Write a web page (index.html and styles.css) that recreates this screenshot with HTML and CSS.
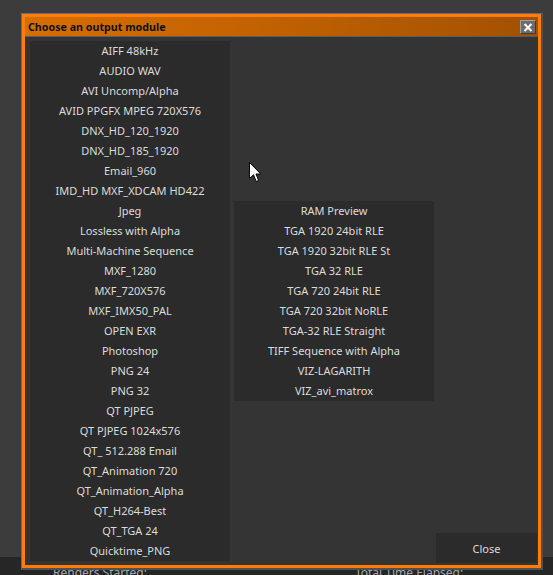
FILE: index.html
```html
<!DOCTYPE html>
<html lang="en">
<head>
    <meta charset="UTF-8">
    <meta name="viewport" content="width=device-width, initial-scale=1.0">
    <title>Choose an output module</title>
    <link rel="stylesheet" href="styles.css">
</head>
<body>

<div class="app">
    <div class="app-top"></div>
    <div class="status-bar">
        <span class="status-left">Renders Started:</span>
        <span class="status-right">Total Time Elapsed:</span>
    </div>
</div>

<!-- Dialog -->
<div class="dialog">
    <div class="frame">
        <div class="titlebar">
            <span class="title">Choose an output module</span>
            <button class="x-btn" aria-label="Close">
                <svg width="10" height="9" viewBox="0 0 10 9">
                    <path d="M1.5 1 L8.5 8 M8.5 1 L1.5 8" stroke="#fff" stroke-width="2" fill="none"/>
                </svg>
            </button>
        </div>
        <div class="body">
            <ul class="list">
                <li>AIFF 48kHz</li>
                <li>AUDIO WAV</li>
                <li>AVI Uncomp/Alpha</li>
                <li>AVID PPGFX MPEG 720X576</li>
                <li>DNX_HD_120_1920</li>
                <li>DNX_HD_185_1920</li>
                <li>Email_960</li>
                <li>IMD_HD MXF_XDCAM HD422</li>
                <li>Jpeg</li>
                <li>Lossless with Alpha</li>
                <li>Multi-Machine Sequence</li>
                <li>MXF_1280</li>
                <li>MXF_720X576</li>
                <li>MXF_IMX50_PAL</li>
                <li>OPEN EXR</li>
                <li>Photoshop</li>
                <li>PNG 24</li>
                <li>PNG 32</li>
                <li>QT PJPEG</li>
                <li>QT PJPEG 1024x576</li>
                <li>QT_ 512.288 Email</li>
                <li>QT_Animation 720</li>
                <li>QT_Animation_Alpha</li>
                <li>QT_H264-Best</li>
                <li>QT_TGA 24</li>
                <li>Quicktime_PNG</li>
            </ul>
            <ul class="list list-side">
                <li>RAM Preview</li>
                <li>TGA 1920 24bit RLE</li>
                <li>TGA 1920 32bit RLE St</li>
                <li>TGA 32 RLE</li>
                <li>TGA 720 24bit RLE</li>
                <li>TGA 720 32bit NoRLE</li>
                <li>TGA-32 RLE Straight</li>
                <li>TIFF Sequence with Alpha</li>
                <li>VIZ-LAGARITH</li>
                <li>VIZ_avi_matrox</li>
            </ul>
            <div class="actions">
                <button class="close-btn">Close</button>
            </div>
        </div>
    </div>
</div>

<!-- mouse pointer -->
<svg class="cursor" width="13" height="21" viewBox="0 0 13 21">
    <path d="M0.5 0.5 L0.5 16.5 L4.5 12.8 L7.2 19.5 L9.6 18.5 L7 12 L11.8 12 Z" fill="#fff" stroke="#000" stroke-width="1"/>
</svg>

</body>
</html>
```

FILE: styles.css
```css
/* Fond de l'application */
body {
    margin: 0;
    width: 553px;
    height: 575px;
    overflow: hidden;
    font-family: "Noto Sans", "DejaVu Sans", sans-serif;
    background-color: #3c3c3c;
}

.app {
    display: flex;
    flex-direction: column;
    height: 575px;
}

.app-top {
    flex: 1;
    background-color: #3c3c3c;
}

.status-bar {
    flex: none;
    height: 18px;
    display: flex;
    padding: 9px 0 0 53px;
    box-sizing: border-box;
    background-color: #262626;
    color: #a8a8a8;
    font-size: 12px;
    line-height: 14px;
    white-space: nowrap;
}

.status-right {
    margin-left: 208px;
}

/* Fenetre */
.dialog {
    position: absolute;
    left: 21px;
    top: 13px;
    width: 522px;
    height: 557px;
    box-sizing: border-box;
    border: 1px solid #6b6b6b;
    border-right: 2px solid #505050;
    border-bottom: 2px solid #505050;
}

.frame {
    height: 100%;
    box-sizing: border-box;
    border: 3px solid #ff7c0a;
    display: flex;
    flex-direction: column;
    background-color: #343434;
}

.titlebar {
    flex: none;
    height: 19px;
    display: flex;
    align-items: center;
    justify-content: space-between;
    padding: 0 2px 0 3px;
    background: linear-gradient(to right, #d66d00, #c56400 40%, #a25100);
    border-bottom: 1px solid #5c5c5c;
}

.title {
    font-size: 10.7px;
    font-weight: bold;
    color: #111;
}

.x-btn {
    width: 16px;
    height: 14px;
    margin-top: 1px;
    padding: 0;
    display: flex;
    align-items: center;
    justify-content: center;
    background-color: #6c6c6c;
    border: 1px solid;
    border-color: #a0a0a0 #3a3a3a #3a3a3a #a0a0a0;
}

.body {
    flex: 1;
    display: grid;
    grid-template-columns: 200px 200px 1fr;
    column-gap: 4px;
    padding: 4px 1px 4px 5px;
    min-height: 0;
}

/* Listes */
.list {
    margin: 0;
    padding: 0;
    list-style: none;
    background-color: #2b2b2b;
}

.list li {
    height: 20px;
    line-height: 20px;
    text-align: center;
    font-size: 11px;
    color: #dcdcdc;
    white-space: nowrap;
}

.list-side {
    align-self: center;
}

.actions {
    display: flex;
    align-items: flex-end;
    margin-left: -2px;
}

.close-btn {
    width: 100%;
    height: 30px;
    margin-bottom: -2px;
    border: none;
    background-color: #2b2b2b;
    color: #dcdcdc;
    font-family: "Noto Sans", "DejaVu Sans", sans-serif;
    font-size: 11px;
}

.cursor {
    position: absolute;
    left: 249px;
    top: 162px;
}
```
